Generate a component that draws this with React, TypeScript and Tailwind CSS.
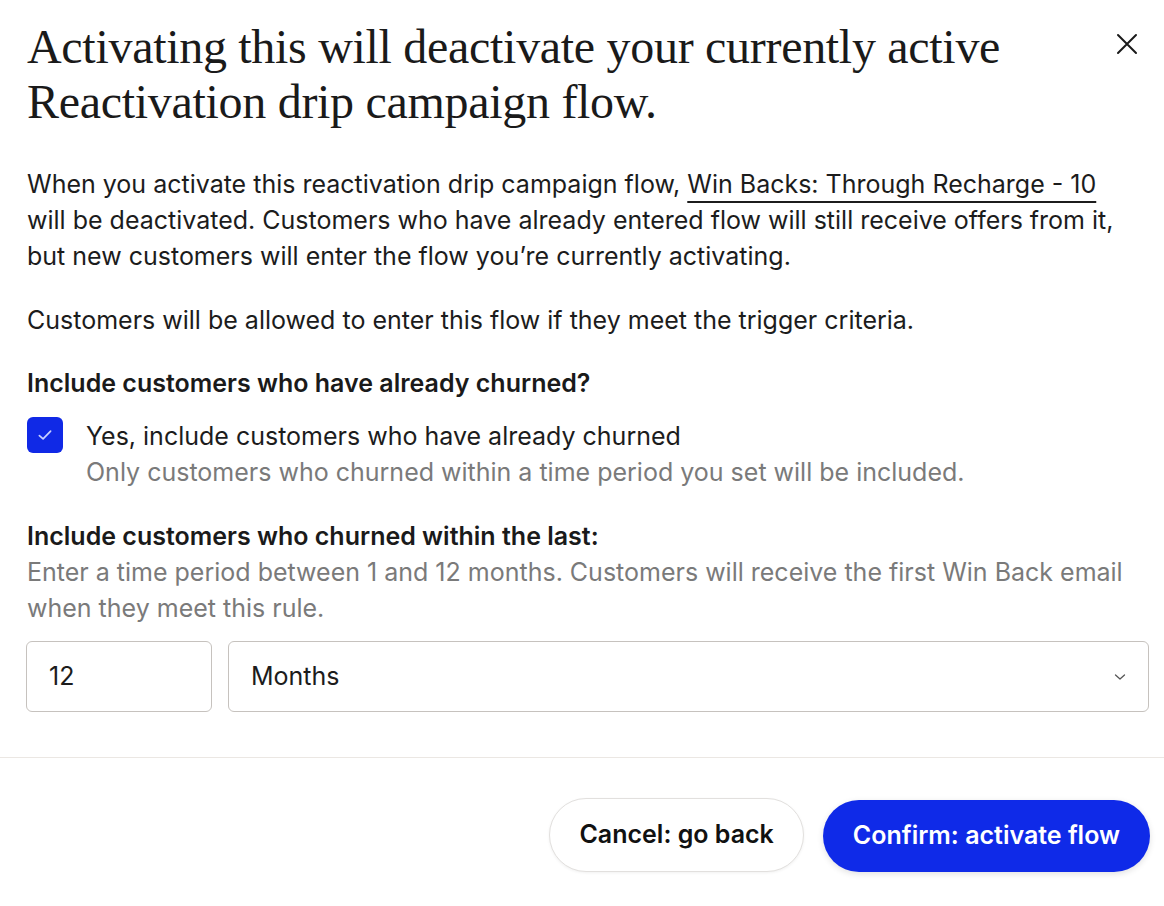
import React from "react";

export default function App() {
  return (
    <div className="w-[1164px] h-[906px] bg-white overflow-hidden" style={{ fontFamily: "Inter, 'Noto Sans', sans-serif" }}>
      <div className="pl-[27px] pr-[24px] pt-[19px]">
        <div className="flex items-start justify-between">
          <h1 className="text-[48px] leading-[55px] text-[#1a1a1a] tracking-[-0.3px]" style={{ fontFamily: "'Liberation Serif', serif" }}>
            Activating this will deactivate your currently active
            <br />
            Reactivation drip campaign flow.
          </h1>
          <button className="mt-[14px] mr-[2px] text-[#1a1a1a]" aria-label="Close">
            <svg width="22" height="22" viewBox="0 0 22 22" fill="none" stroke="currentColor" strokeWidth="2" strokeLinecap="round">
              <path d="M2 2L20 20M20 2L2 20" />
            </svg>
          </button>
        </div>
        <div className="mt-[37px] text-[25px] leading-[36px] text-[#1c1c1c]">
          <p>
            When you activate this reactivation drip campaign flow,{" "}
            <span className="underline decoration-[2px] underline-offset-[8px]">Win Backs: Through Recharge - 10</span>{" "}
            will be deactivated. Customers who have already entered flow will still receive offers from it, but new customers will enter the flow you’re currently activating.
          </p>
          <p className="mt-[28px]">Customers will be allowed to enter this flow if they meet the trigger criteria.</p>
        </div>
        <div className="mt-[27px] text-[25px] leading-[36px] font-semibold text-[#1a1a1a]">Include customers who have already churned?</div>
        <div className="mt-[16px] flex items-start gap-[23px]">
          <div className="w-[36px] h-[36px] rounded-[6px] bg-[#1029e6] flex items-center justify-center shrink-0">
            <svg width="18" height="18" viewBox="0 0 16 16" fill="none" stroke="#c9d0ff" strokeWidth="1.5" strokeLinecap="round" strokeLinejoin="round">
              <path d="M3 8.5L6.3 11.5L13 4.5" />
            </svg>
          </div>
          <div className="mt-[1px]">
            <div className="text-[25px] leading-[36px] text-[#1c1c1c]">Yes, include customers who have already churned</div>
            <div className="text-[25px] leading-[36px] text-[#7a7a7a]">Only customers who churned within a time period you set will be included.</div>
          </div>
        </div>
        <div className="mt-[28px] text-[25px] leading-[36px] font-semibold text-[#1a1a1a]">Include customers who churned within the last:</div>
        <div className="text-[25px] leading-[36px] text-[#7a7a7a]">
          Enter a time period between 1 and 12 months. Customers will receive the first Win Back email when they meet this rule.
        </div>
        <div className="mt-[15px] flex gap-[16px] mr-[-9px] ml-[-1px]">
          <div className="w-[186px] h-[71px] border border-[#c6c2be] rounded-[6px] flex items-center px-[22px] text-[25px] text-[#1c1c1c]">12</div>
          <div className="flex-1 h-[71px] border border-[#c6c2be] rounded-[6px] flex items-center justify-between pl-[22px] pr-[20px] text-[25px] text-[#1c1c1c]">
            <span>Months</span>
            <svg width="16" height="16" viewBox="0 0 16 16" fill="none" stroke="#555" strokeWidth="1.3" strokeLinecap="round" strokeLinejoin="round">
              <path d="M3.5 6L8 10L12.5 6" />
            </svg>
          </div>
        </div>
      </div>
      <div className="mt-[45px] border-t border-[#ebe7e3]" />
      <div className="flex justify-end gap-[19px] pr-[14px] pt-[40px]">
        <button className="h-[74px] px-[29px] rounded-full border border-[#e2e0de] bg-white text-[25px] font-semibold text-[#111] shadow-[0_1px_3px_rgba(0,0,0,0.06)]">
          Cancel: go back
        </button>
        <button className="h-[72px] mt-[2px] px-[30px] rounded-full bg-[#0f2ae8] text-[25px] font-semibold text-white shadow-[0_2px_6px_rgba(0,0,0,0.12)]">
          Confirm: activate flow
        </button>
      </div>
    </div>
  );
}
